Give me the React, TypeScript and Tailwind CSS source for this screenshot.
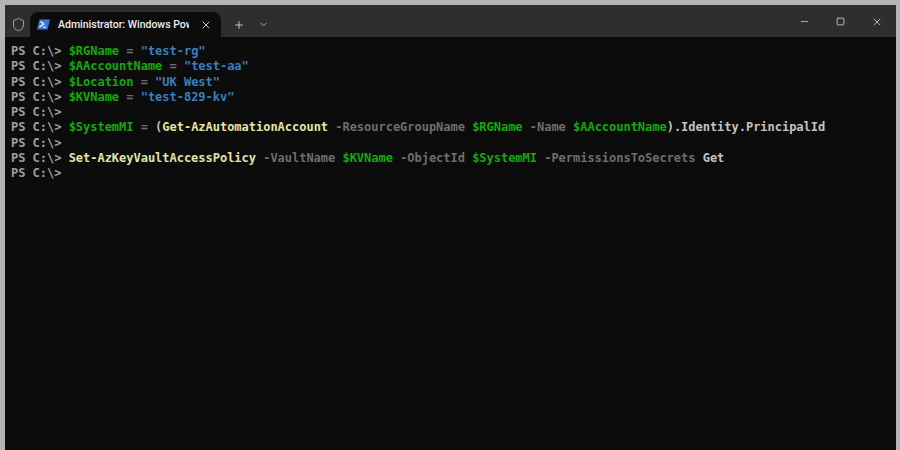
import { ChevronDown, Minus, Plus, Shield, Square, X } from "lucide-react";

const mono = "font-['DejaVu_Sans_Mono','Liberation_Mono',monospace]";

type Part = [string, string];

const green = "text-[#16a80f]";
const blue = "text-[#3a7fbd]";
const gray = "text-[#6e6e6e]";
const yellow = "text-[#e4e4a8]";
const white = "text-[#c4c4c4]";

const lines: Part[][] = [
    [[green, "$RGName"], [gray, " = "], [blue, '"test-rg"']],
    [[green, "$AAccountName"], [gray, " = "], [blue, '"test-aa"']],
    [[green, "$Location"], [gray, " = "], [blue, '"UK West"']],
    [[green, "$KVName"], [gray, " = "], [blue, '"test-829-kv"']],
    [],
    [
        [green, "$SystemMI"],
        [gray, " = "],
        [white, "("],
        [yellow, "Get-AzAutomationAccount"],
        [gray, " -ResourceGroupName "],
        [green, "$RGName"],
        [gray, " -Name "],
        [green, "$AAccountName"],
        [white, ").Identity.PrincipalId"],
    ],
    [],
    [
        [yellow, "Set-AzKeyVaultAccessPolicy"],
        [gray, " -VaultName "],
        [green, "$KVName"],
        [gray, " -ObjectId "],
        [green, "$SystemMI"],
        [gray, " -PermissionsToSecrets "],
        [white, "Get"],
    ],
    [],
];

function PsIcon() {
    return (
        <svg width="13" height="11" viewBox="0 0 13 11" className="shrink-0">
            <path d="M2.5 0.5H13L10.5 10.5H0Z" fill="#3b78d4" />
            <path d="M3.5 2.5L6.8 5L2.5 8" fill="none" stroke="#ffffff" strokeWidth="1.2" />
            <path d="M6 8.2H9" stroke="#ffffff" strokeWidth="1" />
        </svg>
    );
}

export default function App() {
    return (
        <div className="h-[450px] w-[900px] overflow-hidden bg-[#b4b4b4] pl-[5px] pr-[4px] pt-[5px]">
            <div className="flex h-full flex-col bg-[#0c0c0c]">
                <header className="flex h-8 shrink-0 items-end bg-[#2e2e2e] text-[#e4e4e4]">
                    <div className="flex h-full w-[25px] items-center justify-center pl-[1px] pt-[6px]">
                        <Shield className="h-[15px] w-[15px] text-[#a8a8a8]" strokeWidth={1.5} />
                    </div>
                    <div className="flex h-[25px] w-[191px] items-center rounded-t-lg bg-[#0c0c0c] pl-[7px]">
                        <PsIcon />
                        <span className="ml-[8px] w-[131px] overflow-hidden whitespace-nowrap font-['Roboto',sans-serif] text-[10.5px] font-medium text-[#eeeeee]">
                            Administrator: Windows PowerShell
                        </span>
                        <X className="ml-[11px] h-[12px] w-[12px] text-[#dddddd]" strokeWidth={1.8} />
                    </div>
                    <div className="flex h-full items-center pl-[12px] pt-[7px]">
                        <Plus className="h-[12px] w-[12px]" strokeWidth={1.6} />
                        <ChevronDown className="ml-[13px] h-[11px] w-[11px] text-[#bbbbbb]" strokeWidth={1.8} />
                    </div>
                    <div className="ml-auto flex h-full items-center pr-[13px] pt-[1px]">
                        <Minus className="h-[11px] w-[11px]" strokeWidth={1.5} />
                        <Square className="ml-[26px] h-[9px] w-[9px]" strokeWidth={2} />
                        <X className="ml-[26px] h-[12px] w-[12px]" strokeWidth={1.5} />
                    </div>
                </header>
                <main className={`${mono} px-[6px] pt-[7px] text-[12px] font-bold leading-[15.25px] tracking-[-0.02px] whitespace-pre`}>
                    {lines.map((parts, i) => (
                        <div key={i} className="h-[15.25px]">
                            <span className="text-[#a0a0a0]">{"PS C:\\> "}</span>
                            {parts.map(([color, text], j) => (
                                <span key={j} className={color}>
                                    {text}
                                </span>
                            ))}
                        </div>
                    ))}
                </main>
            </div>
        </div>
    );
}
